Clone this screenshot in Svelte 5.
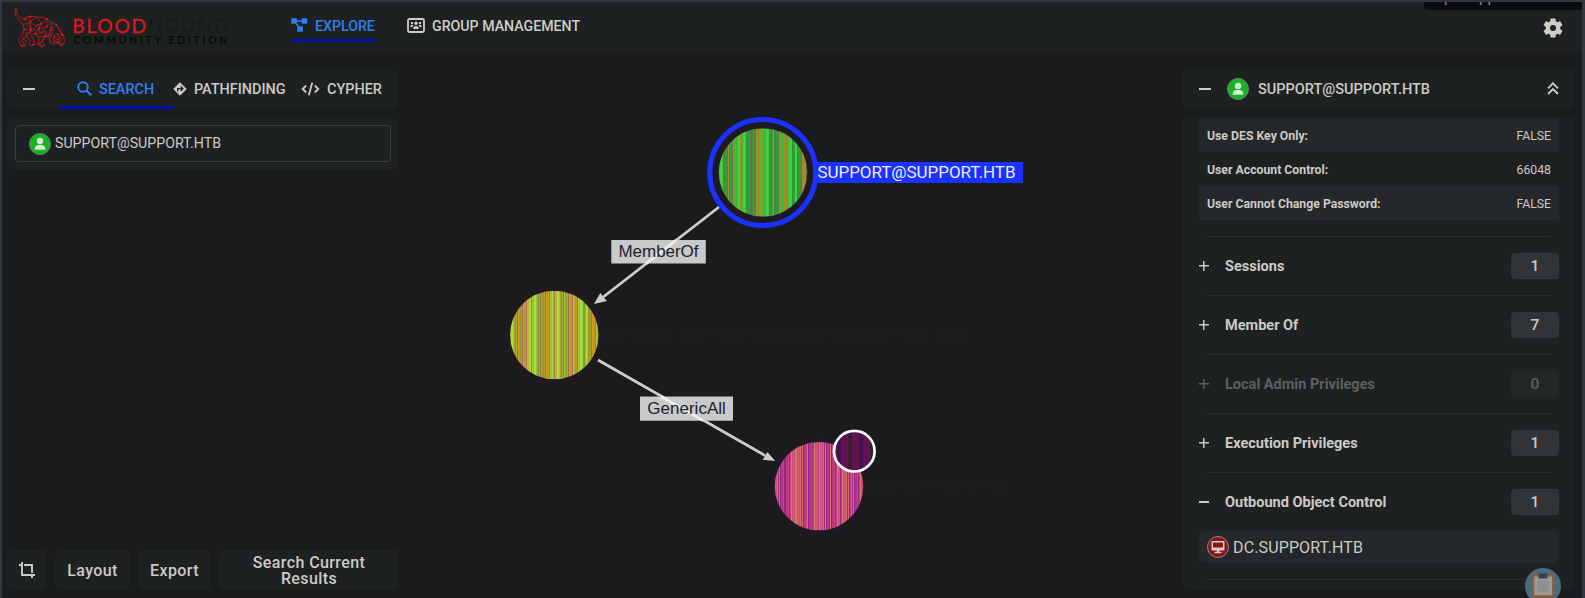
<script>
  const rows = [
    ['Use DES Key Only:', 'FALSE'],
    ['User Account Control:', '66048'],
    ['User Cannot Change Password:', 'FALSE'],
  ];
  const sections = [
    { name: 'Sessions', count: 1 },
    { name: 'Member Of', count: 7 },
    { name: 'Local Admin Privileges', count: 0, disabled: true },
    { name: 'Execution Privileges', count: 1 },
    { name: 'Outbound Object Control', count: 1, open: true },
  ];
  const nodes = [
    { id: 'user', x: 763, y: 172.5, r: 44.3, palette: ['#35bf38', '#558747', '#27e243', '#70a02c', '#329b38', '#5cad3c', '#66735a', '#3cce3d', '#a98b24', '#22a831', '#4bc941', '#9b932c', '#3d8c3d'] },
    { id: 'group', x: 554.3, y: 335, r: 44.3, palette: ['#aaca35', '#9a7248', '#a8e438', '#c69a2b', '#8b9936', '#bdac38', '#dc9820', '#97cc35', '#b07455', '#a4ac35', '#9be044', '#c29230', '#a49a32'] },
    { id: 'dc', x: 819, y: 486.3, r: 44.3, palette: ['#cf4d77', '#b43480', '#d76a72', '#bd4089', '#8d287e', '#d65c66', '#cb447e', '#a72e86', '#d87a70', '#b83985', '#cb5275', '#972c83', '#db6968'] },
    { id: 'glyph', x: 854.3, y: 451.2, r: 20.5, palette: ['#59104f', '#371541', '#65184a', '#4b0c61', '#402036', '#621057', '#321d3b', '#5f1441'] },
  ];
  const stripes = (n) => Array.from({ length: Math.ceil(n.r * 2) + 1 }, (_, i) => ({
    x: Math.floor(n.x - n.r) + i,
    fill: n.palette[(i * 5 + Math.floor(i / 11)) % n.palette.length],
  }));
</script>

{#snippet userIcon()}
  <svg class="badge" viewBox="0 0 22 22"><circle cx="11" cy="11" r="10.5" fill="#17b321" stroke="#75806e"/><circle cx="11" cy="8" r="3.2" fill="#d5ead5"/><path d="M5.7 16.7v-.8c0-2.6 1.8-4 4-4h2.6c2.2 0 4 1.4 4 4v.8z" fill="#d5ead5"/></svg>
{/snippet}

<div class="app">
  <svg class="graph" viewBox="0 0 1585 598">
    {#each nodes as n}<clipPath id={n.id}><circle cx={n.x} cy={n.y} r={n.r}/></clipPath>{/each}
    <circle cx="554.3" cy="335" r="49.5" fill="#1e1a1f"/>
    <circle cx="819" cy="486.3" r="49.5" fill="#1e1a1f"/>
    <g fill="#ccc">
      <path d="M719 207 602 298M598 360l167 95.5" stroke="#ccc" stroke-width="2.8"/>
      <path d="m594 304 6.3-11 2.5 3.2 4.2 4.8zM775.2 461l-7.8-9-4.7 7.8z"/>
    </g>
    <circle cx="762.8" cy="172.5" r="53" fill="#1f1a22" stroke="#1a31ff" stroke-width="5.2"/>
    {#each nodes.slice(0, 3) as n}
      <g clip-path="url(#{n.id})">{#each stripes(n) as s}<rect x={s.x} y={n.y - n.r} width="1" height={n.r * 2} fill={s.fill}/>{/each}</g>
    {/each}
    <g clip-path="url(#glyph)">{#each stripes(nodes[3]) as s}<rect x={s.x} y="430" width="1" height="43" fill={s.fill}/>{/each}</g>
    <circle cx="854.3" cy="451.2" r="20.3" fill="none" stroke="#fff" stroke-width="2.7"/>
    <path d="M815.5 162H1023v21H816Q819 172 815.5 162" fill="#1a31ff"/>
    <g font-family="Roboto" font-size="17">
      <text x="817.5" y="178" fill="#eceeff" textLength="198">SUPPORT@SUPPORT.HTB</text>
      <text x="608.5" y="341" fill="#221b1f" textLength="358">SHARED SUPPORT ACCOUNTS@SUPPORT.HTB</text>
      <text x="874" y="492" fill="#221b1f" textLength="134">DC.SUPPORT.HTB</text>
    </g>
    <path d="M611.3 240h94.5v23.6h-94.5zM640 396.5h93v24.2h-93z" fill="#c8c9c9"/>
    <path d="m676.5 240-30.5 23.6M661 396.5l42 24" stroke="#ededed" stroke-width="2.8"/>
    <g font-family="Liberation Sans" font-size="17" fill="#222127">
      <text x="618.5" y="257" textLength="80">MemberOf</text>
      <text x="647.3" y="414" textLength="78.5">GenericAll</text>
    </g>
  </svg>

  <header>
    <svg class="logo" viewBox="0 0 230 50">
      <g transform="scale(.33333)" fill="none" stroke="#d01c20" stroke-width="2.3" stroke-linejoin="round">
        <path d="M45 28 50 27 51 43 63 55 75 59 74 52 92 49 108 51 125 52 141 57 153 67 169 74 181 89 187 105 195 122 190 134 181 138 176 126 163 134 151 129 149 117 158 98 149 108 134 109 126 125 135 136 124 140 114 132 117 111 105 100 94 105 101 119 105 133 91 138 87 130 92 124 80 106 70 113 66 123 75 137 64 139 58 125 55 116 68 102 73 88 69 74 59 61 47 49z"/>
        <path stroke-width="1.9" d="m75 59 17-10-2 18 18-16 17 20 16-14-1 22 13-12 3 21 13-15 6 17 18 16-24-6 12 14-18-8-4 21 16-10 4 13-16-4 16-14 10 22-13-3M69 74l21-7-17 21 20 4-3-25 17 10 18-6-10 16 25-8-19 23-6-31-14 21-24 10 14-2-2-22 24 17-7 11 15-9 19-2-6 18 16-14 3-19-8 33-20-22m-48 5 5 14-12 9 9 3-4 18M117 111l17-2-8 16-12 7 10-2"/>
        <g fill="#e01d21" stroke="none">{#each [[75,59],[92,49],[125,71],[90,67],[141,57],[93,88],[115,87],[140,80],[156,90],[169,74],[187,105],[163,114],[134,109],[105,100],[175,126],[73,88],[125,137],[99,134],[67,137]] as p}<circle cx={p[0]} cy={p[1]} r="2.8"/>{/each}</g>
      </g>
      <text x="72.3" y="32.5" textLength="156" font-family="Lato" font-size="19.3" fill="#dc181d" stroke="#dc181d" stroke-width=".3">BLOOD<tspan fill="#1a1b1c" stroke="none">HOUND</tspan></text>
      <text x="73.3" y="43.8" textLength="154" font-family="Lato" font-weight="700" font-size="10.4" fill="#090a0a">COMMUNITY EDITION</text>
    </svg>
    <nav>
      <div class="link active"><svg width="17" height="14" viewBox="0 0 17 14"><path d="M1 1h4v4H1zM11.5 1h4v4h-4zM7 9h4v4H7zM5 3h7M4 4l4.5 6" fill="currentColor" stroke="currentColor" stroke-width="1.5"/></svg><span>EXPLORE</span></div>
      <div class="link"><svg width="18" height="15" viewBox="0 0 18 15"><rect x="1" y="1" width="16" height="13" rx="1.5" fill="none" stroke="currentColor" stroke-width="1.8"/><g fill="currentColor"><circle cx="9" cy="5.3" r="1.7"/><circle cx="5" cy="5" r="1.2"/><circle cx="13" cy="5" r="1.2"/><path d="M6 11c0-4 6-4 6 0zM3.2 9c0-2.8 2.8-2.8 3.2-1.5L5.5 9zM14.8 9c0-2.8-2.8-2.8-3.2-1.5l.9 1.5z"/></g></svg><span>GROUP MANAGEMENT</span></div>
    </nav>
    <svg class="gear" width="24" height="24" viewBox="0 0 24 24"><path fill="currentColor" d="M19.14 12.94c.04-.3.06-.61.06-.94s-.02-.64-.07-.94l2.03-1.58a.49.49 0 0 0 .12-.61l-1.92-3.32a.49.49 0 0 0-.59-.22l-2.39.96c-.5-.38-1.03-.7-1.62-.94l-.36-2.54a.48.48 0 0 0-.48-.41h-3.84c-.24 0-.43.17-.47.41l-.36 2.54c-.59.24-1.13.57-1.62.94l-2.39-.96a.48.48 0 0 0-.59.22L2.74 8.87c-.12.21-.08.47.12.61l2.03 1.58c-.05.3-.09.63-.09.94s.02.64.07.94l-2.03 1.58a.49.49 0 0 0-.12.61l1.92 3.32c.12.22.37.29.59.22l2.39-.96c.5.38 1.03.7 1.62.94l.36 2.54c.05.24.24.41.48.41h3.84c.24 0 .44-.17.47-.41l.36-2.54c.59-.24 1.13-.56 1.62-.94l2.39.96c.22.08.47 0 .59-.22l1.92-3.32a.48.48 0 0 0-.12-.61zM12 15a3 3 0 1 1 0-6 3 3 0 0 1 0 6"/></svg>
  </header>
  <div class="tip"><span>p</span><span>pp</span></div>

  <main>
    <section class="left">
      <div class="card tabs">
        <i class="minus"></i>
        <div class="tab on"><svg width="15" height="15" viewBox="0 0 15 15" fill="none" stroke="currentColor" stroke-width="1.9"><circle cx="6" cy="6" r="4.8"/><path d="m9.5 9.5 4.8 4.8"/></svg><span>SEARCH</span></div>
        <div class="tab path"><svg width="14" height="14" viewBox="0 0 14 14"><path d="M7 .7 13.3 7 7 13.3.7 7z" fill="currentColor" stroke="currentColor" stroke-linejoin="round"/><path d="M4.7 9.4V6.7h4.6M7.7 4.5l2.2 2.2L7.7 9" fill="none" stroke="#1e2122" stroke-width="1.3"/></svg><span>PATHFINDING</span></div>
        <div class="tab"><svg width="19" height="14" viewBox="0 0 19 14" fill="none" stroke="currentColor" stroke-width="1.8"><path d="M5.2 3.5 1.7 7l3.5 3.5M13.8 3.5 17.3 7l-3.5 3.5M11.2.8 7.8 13.2"/></svg><span>CYPHER</span></div>
      </div>
      <div class="card search"><div class="field">{@render userIcon()}<span>SUPPORT@SUPPORT.HTB</span></div></div>
      <div class="actions">
        <button class="crop" aria-label="Reset view"><svg width="16" height="16" viewBox="0 0 16 16" fill="none" stroke="currentColor" stroke-width="1.9"><path d="M0 3h2.5M3 0v13h13M5 3h8v8M13 13v3"/></svg></button>
        <button>Layout</button><button>Export</button><button>Search Current<br/>Results</button>
      </div>
    </section>

    <aside>
      <div class="card title"><i class="minus"></i>{@render userIcon()}<b>SUPPORT@SUPPORT.HTB</b><svg class="up" width="12" height="13" viewBox="0 0 12 13" fill="none" stroke="currentColor" stroke-width="1.9"><path d="m1 6.3 5-5 5 5M1 12l5-5 5 5"/></svg></div>
      <div class="card info">
        {#each rows as r}<div class="row"><b>{r[0]}</b><span>{r[1]}</span></div>{/each}
        <div class="gap"></div>
        {#each sections as s}
          <hr/>
          <div class="sec" class:disabled={s.disabled}><i class="sign" class:open={s.open}></i><b>{s.name}</b><span class="count">{s.count}</span></div>
        {/each}
        <div class="item"><svg class="badge" viewBox="0 0 22 22"><circle cx="11" cy="11" r="10.5" fill="#831617" stroke="#aa8477"/><path d="M5.5 5h11q1 0 1 1v7.5q0 1-1 1h-11q-1 0-1-1V6q0-1 1-1zM9.8 14h2.4v1.8h2.3v1.4h-7v-1.4h2.3z" fill="#dfc8c7"/><path d="M6 6.5h10v5H6z" fill="#831617"/></svg><span>DC.SUPPORT.HTB</span></div>
        <hr/>
      </div>
    </aside>
  </main>
  <svg class="clip" viewBox="0 0 36 36"><circle cx="18" cy="18" r="18" fill="#4a6b7d"/><rect x="7.3" y="6" width="21.7" height="23.5" rx="1" fill="#965c35"/><path d="M9.3 8.5H27v18.7H9.3z" fill="#999a9a"/><path d="M13.5 5.5h9v5h-9z" fill="#353e4c"/><path d="M12.5 13.6h11.5M12.5 16h11.5M12.5 18.4h11.5M12.5 20.8h11.5M12.5 23.2h11.5" stroke="#828483"/></svg>
</div>

<style>
  :global(body) { background: #1a1a1c; }
  .app { position: relative; box-sizing: border-box; width: 1585px; height: 598px; overflow: hidden; border: solid #2f3644; border-width: 2px 3px 0 2px; background: #1a1b1c; font-family: Roboto, sans-serif; font-size: 15.5px; color: #cccac5; }
  svg { display: block; flex: none; }
  .graph { position: absolute; left: -2px; top: -2px; width: 1585px; height: 598px; }
  header { position: relative; display: flex; height: 51px; background: #1e2122; }
  .logo { width: 230px; height: 50px; margin: -2px 0 0 -2px; }
  nav { display: flex; gap: 32px; padding: 11px 0 0 61px; }
  .link { display: flex; align-items: center; box-sizing: border-box; height: 29px; padding-bottom: 1px; font-weight: 500; white-space: nowrap; border-bottom: 3px solid transparent; color: #cfcdc7; }
  .link svg { margin: 0 7px 1px 0; }
  .link span, .tab span, .field span, .title b, .sec b { display: inline-block; transform-origin: left; }
  .link span { transform: scaleX(.914); }
  .tab span { transform: scaleX(.93); }
  .link.active { color: #2f7ff0; border-color: #0311a8; width: 84px; }
  .gear { margin: 14px 17px 0 auto; color: #cfcdc7; }
  .tip { position: absolute; top: 0; right: 0; width: 158px; height: 8px; box-sizing: border-box; padding-left: 20px; overflow: hidden; display: flex; gap: 26.6px; line-height: 18px; font-size: 15px; color: #8e8e8e; background: #0b0b0c; border-bottom-left-radius: 3px; }
  .tip span { margin-top: -14px; }
  main { position: relative; display: flex; justify-content: space-between; height: 545px; box-sizing: border-box; padding: 16px 7px 8px 5px; }
  .left { width: 392px; display: flex; flex-direction: column; }
  .card { background: #1e2122; border-radius: 8px; box-sizing: border-box; }
  .tabs { display: flex; height: 40px; padding-left: 16px; }
  .minus { width: 12px; height: 2px; background: #cfcdc7; margin-top: 19px; flex: none; }
  .tab { display: flex; align-items: center; height: 40px; box-sizing: border-box; padding-top: 3px; font-weight: 500; white-space: nowrap; border-bottom: 3px solid transparent; }
  .tab svg { margin: 0 7px 1px 0; }
  .tab.on { width: 114px; margin-left: 24px; padding-left: 18px; color: #2f7ff0; border-color: #0010b8; }
  .tab.path { width: 128px; }
  .search { height: 53px; margin-top: 8px; padding: 8px; }
  .field { display: flex; align-items: center; height: 37px; box-sizing: border-box; border: 1px solid #393b3c; border-radius: 4px; padding-left: 13px; }
  .badge { width: 22px; height: 22px; }
  .field span { margin: -2px 0 0 4px; transform: scaleX(.915); }
  .actions { display: grid; grid-template-columns: 40px 75px 73px 180px; gap: 8px; height: 40px; margin-top: auto; }
  button { display: grid; place-items: center; height: 40px; padding: 2px 0 0; border: 0; border-radius: 5px; background: #1e2122; color: #cccac5; font: 500 16px/16px Roboto, sans-serif; letter-spacing: .4px; text-align: center; }
  .crop { padding: 0; }
  aside { width: 392px; display: flex; flex-direction: column; gap: 8px; }
  aside .card { border-radius: 5px; }
  .title { display: flex; height: 40px; padding: 0 16px; }
  .title .badge { margin: 9px 9px 0 16px; }
  .title b { font-weight: 500; line-height: 40px; transform: scaleX(.936); }
  .up { margin: 13px 0 0 auto; }
  .info { height: 473px; overflow: hidden; padding: 1px 16px 0; }
  .row { display: flex; justify-content: space-between; align-items: center; height: 34px; box-sizing: border-box; padding: 2px 8px 0; font-size: 12.25px; }
  .row:nth-child(odd) { background: #25282b; }
  .row b { font-weight: 700; }
  .gap { height: 16px; }
  hr { height: 1px; border: 0; margin: 0 8px; background: #2c2e2f; }
  .sec { display: flex; align-items: center; height: 58px; }
  .sec b { font-weight: 700; margin-left: 16px; transform: scaleX(.937); }
  .sign { width: 10px; height: 10px; background: linear-gradient(currentColor, currentColor) center / 10px 1.5px no-repeat, linear-gradient(currentColor, currentColor) center / 1.5px 10px no-repeat; }
  .sign.open { background: linear-gradient(currentColor, currentColor) center / 10px 2px no-repeat; }
  .count { display: grid; place-items: center; width: 48px; height: 26px; margin-left: auto; border-radius: 4px; background: #303436; font-weight: 500; }
  .disabled { color: #5e6060; }
  .disabled .count { background: #242728; }
  .item { display: flex; align-items: center; height: 32px; padding-left: 8px; margin-bottom: 16px; border-radius: 5px; background: #25282b; font-size: 16px; }
  .item span { margin-left: 4px; letter-spacing: .13px; }
  .clip { position: absolute; left: 1523px; top: 566px; width: 36px; height: 36px; }
</style>
